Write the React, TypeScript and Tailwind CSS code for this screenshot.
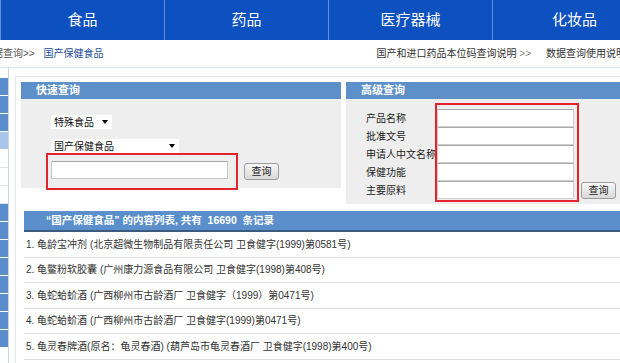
import React from 'react';

const navItems = ['食品', '药品', '医疗器械', '化妆品'];

const rows = [
  '1. 龟龄宝冲剂 (北京超微生物制品有限责任公司  卫食健字(1999)第0581号)',
  '2. 龟鳖粉软胶囊 (广州康力源食品有限公司  卫食健字(1998)第408号)',
  '3. 龟蛇蛤蚧酒 (广西柳州市古龄酒厂  卫食健字（1999）第0471号)',
  '4. 龟蛇蛤蚧酒 (广西柳州市古龄酒厂  卫食健字(1999)第0471号)',
  '5. 龟灵春牌酒(原名：龟灵春酒) (葫芦岛市龟灵春酒厂  卫食健字(1998)第400号)',
];

const labels = ['产品名称', '批准文号', '申请人中文名称', '保健功能', '主要原料'];

// sidebar strip that is cut off at the left edge
const sideCells = [
  'bg-[#5b8ccb]', 'bg-[#5b8ccb]', 'bg-[#5b8ccb]', 'bg-[#a9c6ea]',
  'bg-white', 'bg-white', 'bg-white',
  'bg-[#5b8ccb]', 'bg-[#5b8ccb]', 'bg-[#5b8ccb]', 'bg-[#5b8ccb]',
  'bg-[#5b8ccb]', 'bg-[#5b8ccb]', 'bg-[#5b8ccb]', 'bg-[#5b8ccb]',
];

function Caret() {
  return <span className="ml-auto mr-[4px] w-0 h-0 border-l-[3px] border-r-[3px] border-t-[4px] border-l-transparent border-r-transparent border-t-black" />;
}

function Button() {
  return (
    <div className="w-[35px] h-[17px] flex items-center justify-center text-[10px] text-[#222] rounded-[3px] border border-[#9c9c9c] bg-gradient-to-b from-[#f7f7f7] to-[#d9d9d9]">
      查询
    </div>
  );
}

export default function App() {
  return (
    <div
      className="w-[620px] h-[363px] overflow-hidden bg-white flex flex-col"
      style={{ fontFamily: '"Liberation Sans", "Noto Sans CJK SC", sans-serif' }}
    >
      {/* top nav */}
      <div className="h-[40px] bg-[#0d50bf] flex shrink-0">
        {navItems.map((n) => (
          <div key={n} className="w-[164px] shrink-0 border-l border-[#5e8fd8] flex items-center justify-center text-white text-[15px]">
            {n}
          </div>
        ))}
      </div>

      {/* breadcrumb */}
      <div className="h-[28px] flex items-center text-[10px] border-b border-[#dfe5ec] shrink-0">
        <div className="ml-[-17px] text-[#555] whitespace-nowrap">数据查询&gt;&gt; <span className="ml-[6px] text-[#1c4c98]">国产保健食品</span></div>
        <div className="ml-auto text-[#333] whitespace-nowrap">国产和进口药品本位码查询说明 <span className="text-[#888]">&gt;&gt;</span></div>
        <div className="ml-[15px] mr-[-6px] text-[#333] whitespace-nowrap">数据查询使用说明</div>
      </div>

      <div className="flex flex-1">
        {/* sidebar */}
        <div className="w-[9px] pt-[10px] flex flex-col border-r border-[#c9d3df]">
          {sideCells.map((c, i) => (
            <div key={i} className={`h-[18px] border-b ${c} ${c === 'bg-white' ? 'border-[#dde3ea]' : 'border-white'}`} />
          ))}
        </div>

        {/* content */}
        <div className="ml-[6px] mt-[8px] flex-1 border-l border-t border-[#e3e8ee] pl-[5px] pt-[5px]">
          <div className="flex items-start gap-[5px]">
            {/* quick search */}
            <div className="w-[320px]">
              <div className="h-[17px] bg-[#5d8fc9] text-white font-bold text-[11px] pl-[15px] flex items-center">快速查询</div>
              <div className="relative h-[89px] bg-[#eeeeee] pl-[30px] pt-[16px]">
                <div className="w-[61px] h-[14px] bg-white flex items-center text-[10px] text-[#111] pl-[3px]">特殊食品<Caret /></div>
                <div className="mt-[10px] w-[128px] h-[14px] bg-white flex items-center text-[10px] text-[#111] pl-[3px]">国产保健食品<Caret /></div>
                <div className="mt-[7px] flex items-center">
                  <input readOnly className="w-[177px] h-[18px] bg-white border border-[#c9c9c9] border-t-[#a9a9a9] outline-none" />
                  <div className="ml-[16px] mt-[3px]"><Button /></div>
                </div>
                <div className="absolute left-[25px] top-[54px] w-[192px] h-[37px] border-2 border-[#e5232d]" />
              </div>
            </div>

            {/* advanced search */}
            <div className="flex-1">
              <div className="h-[17px] bg-[#5d8fc9] text-white font-bold text-[11px] pl-[15px] flex items-center">高级查询</div>
              <div className="relative h-[105px] bg-[#eeeeee] pl-[20px] pt-[10px] flex">
                <div className="w-[71px] flex flex-col text-[10px] text-[#222] overflow-hidden whitespace-nowrap">
                  {labels.map((l) => (
                    <div key={l} className="h-[18px] flex items-center">{l}</div>
                  ))}
                </div>
                <div className="flex flex-col">
                  {labels.map((l) => (
                    <input key={l} readOnly className="w-[137px] h-[18px] bg-white border border-[#cfcfcf] border-t-[#a9a9a9] outline-none" />
                  ))}
                </div>
                <div className="ml-[7px] self-end mb-[5px]"><Button /></div>
                <div className="absolute left-[89px] top-[4px] w-[144px] h-[99px] border-2 border-[#e5232d]" />
              </div>
            </div>
          </div>

          {/* result list */}
          <div className="ml-[3px] mt-[7px]">
            <div className="h-[21px] bg-[#5b8fcb] border-b-2 border-[#3b5a7e] text-white font-bold text-[10.5px] pl-[22px] flex items-center">
              “国产保健食品” 的内容列表, 共有 &nbsp;16690&nbsp; 条记录
            </div>
            {rows.map((r) => (
              <div key={r} className="h-[25.5px] border-b border-[#dedede] flex items-center pl-[2px] text-[10px] text-[#333] whitespace-nowrap">
                {r}
              </div>
            ))}
          </div>
        </div>
      </div>
    </div>
  );
}
